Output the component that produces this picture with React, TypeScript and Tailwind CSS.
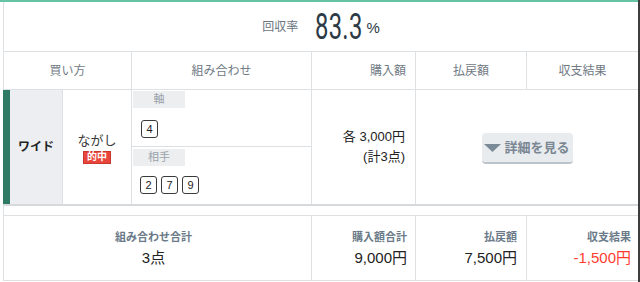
import React from "react";

const headCell = "flex items-center text-[12px] text-[#707a84] border-r border-[#dde1e4]";

function NumBox({ n }: { n: string }) {
  return (
    <span className="flex items-center justify-center w-[17px] h-[18px] border border-[#3a3a3a] rounded-[3px] text-[11px] text-[#222] leading-none">
      {n}
    </span>
  );
}

function SubLabel({ text }: { text: string }) {
  return (
    <div className="ml-px w-[52px] h-[17px] bg-[#eceef0] flex items-center justify-center text-[11px] text-[#9aa2aa]">
      {text}
    </div>
  );
}

export default function App() {
  return (
    <div className="flex w-[640px] h-[282px] bg-white font-['Liberation_Sans','Noto_Sans_CJK_JP',sans-serif]">
      <div className="w-[638px] flex flex-col">
        <div className="h-[2px] bg-[#66c2a5]" />
        <div className="ml-[3px] border-l border-[#dde1e4] flex flex-col">
          {/* 回収率 */}
          <div className="h-[50px] border-b border-[#dde1e4] flex items-center justify-center">
            <span className="text-[12px] text-[#6b7580] mr-[17px]">回収率</span>
            <span className="inline-block origin-left scale-x-[0.66] mr-[-24px] font-['Roboto'] text-[36px] leading-none text-[#2b3a45] tracking-[0.5px]">
              83.3
            </span>
            <span className="ml-[3px] mt-[3px] text-[15px] text-[#2b3a45]">%</span>
          </div>

          {/* header */}
          <div className="h-[38px] border-b border-[#dde1e4] flex">
            <div className={`${headCell} w-[128px] justify-center`}>買い方</div>
            <div className={`${headCell} w-[180px] justify-center`}>組み合わせ</div>
            <div className={`${headCell} w-[104px] justify-end pr-[9px]`}>購入額</div>
            <div className={`${headCell} w-[111px] justify-center`}>払戻額</div>
            <div className="flex-1 flex items-center justify-center text-[12px] text-[#707a84]">収支結果</div>
          </div>

          {/* data row */}
          <div className="h-[116px] border-b-2 border-[#d6dadd] flex -ml-px">
            <div className="w-[7px] bg-[#2f7a63]" />
            <div className="w-[53px] bg-[#eceef1] border-r border-[#dde1e4] flex items-center justify-center text-[12px] font-bold text-[#222]">
              ワイド
            </div>
            <div className="w-[69px] border-r border-[#dde1e4] flex flex-col items-center justify-center">
              <span className="text-[13px] text-[#3a3a3a] leading-[16px] mt-[2px]">ながし</span>
              <span className="mt-[2px] w-[28px] h-[13px] bg-[#e8453c] border border-[#c9372f] flex items-center justify-center text-[10px] font-bold text-white leading-none">
                的中
              </span>
            </div>
            <div className="w-[180px] border-r border-[#dde1e4] flex flex-col">
              <div className="h-[57px] border-b border-[#dde1e4] pt-px">
                <SubLabel text="軸" />
                <div className="flex gap-[4px] ml-[9px] mt-[12px]">
                  <NumBox n="4" />
                </div>
              </div>
              <div className="flex-1 pt-[2px]">
                <SubLabel text="相手" />
                <div className="flex gap-[4px] ml-[8px] mt-[10px]">
                  <NumBox n="2" />
                  <NumBox n="7" />
                  <NumBox n="9" />
                </div>
              </div>
            </div>
            <div className="w-[104px] border-r border-[#dde1e4] flex flex-col items-end justify-center pr-[10px] text-[13px] text-[#222] leading-[20px]">
              <span>各 3,000円</span>
              <span>(計3点)</span>
            </div>
            <div className="flex-1 flex items-center justify-center">
              <button className="mt-[3px] w-[91px] h-[31px] rounded-[4px] bg-[#e9ecef] border-b-2 border-[#bcc4cb] flex items-center justify-center gap-[3px] text-[13px] font-bold text-[#7b8793]">
                <svg width="17" height="8" viewBox="0 0 17 8">
                  <path d="M0 0 H17 L8.5 8 Z" fill="#7b8a97" />
                </svg>
                詳細を見る
              </button>
            </div>
          </div>

          {/* spacer */}
          <div className="h-[10px] border-b border-[#dde1e4]" />

          {/* footer */}
          <div className="h-[65px] border-b border-[#dde1e4] flex">
            <div className="w-[308px] border-r border-[#dde1e4] flex flex-col items-center justify-center pr-[8px]">
              <span className="text-[11px] font-bold text-[#6b7a88] leading-[20px]">組み合わせ合計</span>
              <span className="text-[15px] text-[#222] leading-[22px]">3点</span>
            </div>
            <div className="w-[104px] border-r border-[#dde1e4] flex flex-col items-end justify-center pr-[8px]">
              <span className="text-[11px] font-bold text-[#6b7a88] leading-[20px]">購入額合計</span>
              <span className="text-[15px] text-[#222] leading-[22px]">9,000円</span>
            </div>
            <div className="w-[111px] border-r border-[#dde1e4] flex flex-col items-end justify-center pr-[9px]">
              <span className="text-[11px] font-bold text-[#6b7a88] leading-[20px]">払戻額</span>
              <span className="text-[15px] text-[#222] leading-[22px]">7,500円</span>
            </div>
            <div className="flex-1 flex flex-col items-end justify-center pr-[7px]">
              <span className="text-[11px] font-bold text-[#6b7a88] leading-[20px]">収支結果</span>
              <span className="text-[15px] text-[#ff3b30] leading-[22px]">-1,500円</span>
            </div>
          </div>
        </div>
      </div>
      <div className="w-[2px] h-[282px] bg-[#3d3d3d]" />
    </div>
  );
}
